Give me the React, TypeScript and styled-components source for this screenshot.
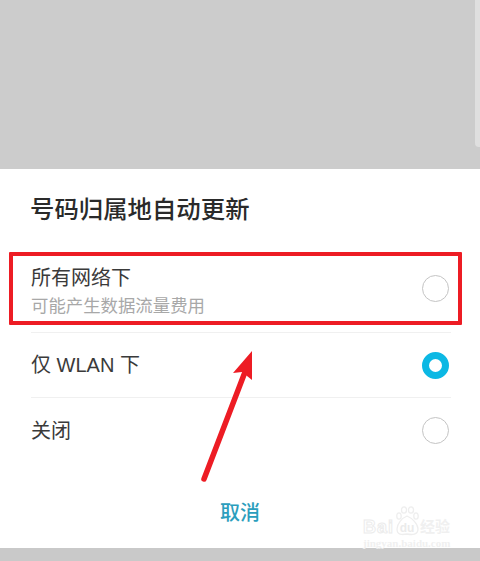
import React from 'react';
import styled, { createGlobalStyle } from 'styled-components';

const GlobalStyle = createGlobalStyle`
  html, body {
    margin: 0;
    padding: 0;
    background: #fff;
  }
  body {
    font-family: "Liberation Sans", "Noto Sans CJK SC", sans-serif;
  }
`;

const Page = styled.div`
  position: relative;
  width: 480px;
  height: 561px;
  display: flex;
  flex-direction: column;
  overflow: hidden;
`;

const Backdrop = styled.div`
  height: 169px;
  background: #cccccc;
  display: flex;
  justify-content: flex-end;
`;

const ScrollEdge = styled.div`
  width: 5px;
  height: 147px;
  background: #dfdfdf;
  border-bottom-left-radius: 4px;
`;

const Sheet = styled.div`
  height: 379px;
  background: #fff;
  display: flex;
  flex-direction: column;
`;

const Title = styled.div`
  padding: 26px 30px 0;
  height: 57px;
  box-sizing: border-box;
  font-size: 24.4px;
  line-height: 29px;
  font-weight: 500;
  color: #2a2a2a;
`;

const OptionList = styled.div`
  padding: 0 29px 0 31px;
  display: flex;
  flex-direction: column;
`;

const Option = styled.div<{ $height: number; $inset?: number; $divider?: boolean }>`
  height: ${p => p.$height}px;
  box-sizing: border-box;
  display: flex;
  align-items: center;
  justify-content: space-between;
  padding: ${p => p.$inset ?? 0}px 2px 0 0;
  border-bottom: ${p => (p.$divider ? '1px solid #f0f0f0' : 'none')};
`;

const OptionText = styled.div`
  display: flex;
  flex-direction: column;
  padding-top: 4px;
`;

const OptionLabel = styled.div`
  font-size: 20px;
  line-height: 26px;
  color: #3a3a3a;
`;

const OptionHint = styled.div`
  font-size: 17.4px;
  line-height: 22px;
  margin-top: 4px;
  color: #a8a8a8;
`;

const Radio = styled.div<{ $checked?: boolean }>`
  width: 27px;
  height: 27px;
  box-sizing: border-box;
  border-radius: 50%;
  background: #fff;
  border: ${p => (p.$checked ? '7px solid #0cb8e4' : '1.5px solid #c4c4c4')};
`;

const CancelButton = styled.div`
  margin-top: 37px;
  text-align: center;
  font-size: 20px;
  line-height: 26px;
  font-weight: 500;
  color: #2b9ebd;
`;

const BottomStrip = styled.div`
  flex: 1;
  background: #c9c9c9;
`;

const Highlight = styled.div`
  position: absolute;
  left: 9px;
  top: 252px;
  width: 453px;
  height: 73px;
  box-sizing: border-box;
  border: 4px solid #ed1c24;
  border-radius: 1px;
`;

const Arrow = styled.svg`
  position: absolute;
  left: 190px;
  top: 340px;
`;

const Watermark = styled.div`
  position: absolute;
  left: 363px;
  top: 506px;
  width: 90px;
`;

const WatermarkRow = styled.div`
  display: flex;
  align-items: flex-end;
  height: 30px;
`;

const WatermarkBrand = styled.span`
  font-size: 18px;
  line-height: 18px;
  font-weight: 700;
  letter-spacing: 1px;
  color: #fff;
  -webkit-text-stroke: 1px #ececec;
`;

const WatermarkPaw = styled.svg`
  flex: none;
`;

const WatermarkCn = styled.span`
  font-size: 15px;
  line-height: 18px;
  font-weight: 700;
  color: #f0f0f0;
`;

const WatermarkUrl = styled.div`
  font-family: "Liberation Serif", serif;
  font-size: 11px;
  line-height: 12px;
  margin-top: 1px;
  font-weight: 700;
  white-space: nowrap;
  color: #f0f0f0;
`;

export default function App() {
  return (
    <Page>
      <GlobalStyle />
      <Backdrop>
        <ScrollEdge />
      </Backdrop>
      <Sheet>
        <Title>号码归属地自动更新</Title>
        <OptionList>
          <Option $height={107} $inset={19} $divider>
            <OptionText>
              <OptionLabel>所有网络下</OptionLabel>
              <OptionHint>可能产生数据流量费用</OptionHint>
            </OptionText>
            <Radio />
          </Option>
          <Option $height={65} $divider>
            <OptionLabel>仅 WLAN 下</OptionLabel>
            <Radio $checked />
          </Option>
          <Option $height={65}>
            <OptionLabel>关闭</OptionLabel>
            <Radio />
          </Option>
        </OptionList>
        <CancelButton>取消</CancelButton>
      </Sheet>
      <BottomStrip />

      <Highlight />
      <Arrow width="80" height="150" viewBox="0 0 80 150">
        <path d="M14 139 L55 32" stroke="#ed1c24" strokeWidth="5.5" strokeLinecap="round" fill="none" />
        <path d="M62 11 L62 40 L52 32 L43 33 Z" fill="#ed1c24" />
      </Arrow>
      <Watermark>
        <WatermarkRow>
          <WatermarkBrand>Bai</WatermarkBrand>
          <WatermarkPaw width="26" height="30" viewBox="0 0 26 30">
            <g fill="none" stroke="#eeeeee" strokeWidth="1.3">
              <ellipse cx="5" cy="10" rx="2.2" ry="3.2" />
              <ellipse cx="10" cy="4" rx="2.5" ry="3.2" />
              <ellipse cx="17" cy="4" rx="2.5" ry="3.2" />
              <ellipse cx="22" cy="10" rx="2.2" ry="3.2" />
              <path d="M13 10 C8 12 3 18 3 23 C3 29 8 29 13 28 C18 29 24 29 24 23 C24 18 18 12 13 10 Z" />
            </g>
            <text x="13" y="26" fontSize="12" fontWeight="700" textAnchor="middle" fill="#ebebeb" fontFamily="Liberation Sans">du</text>
          </WatermarkPaw>
          <WatermarkCn>经验</WatermarkCn>
        </WatermarkRow>
        <WatermarkUrl>jingyan.baidu.com</WatermarkUrl>
      </Watermark>
    </Page>
  );
}
